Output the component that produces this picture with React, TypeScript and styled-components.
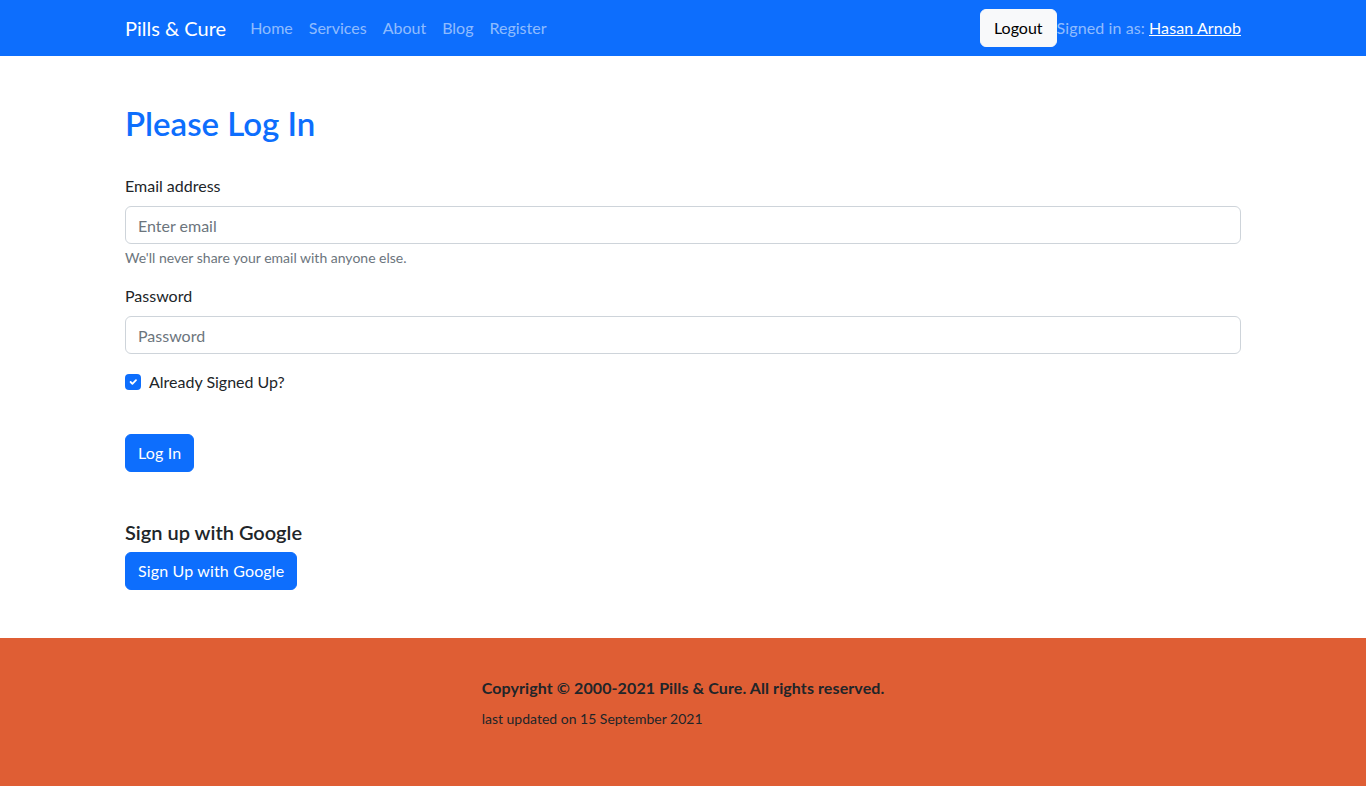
import React from "react";
import styled, { createGlobalStyle } from "styled-components";

const Global = createGlobalStyle`
  * { box-sizing: border-box; }
  html, body { margin: 0; padding: 0; }
  body {
    font-family: Lato, "Liberation Sans", sans-serif;
    font-size: 16px;
    line-height: 1.5;
    color: #212529;
    background: #fff;
  }
`;

const Navbar = styled.nav`
  background: #0d6efd;
  height: 56px;
`;

const Container = styled.div`
  width: 1140px;
  margin: 0 auto;
  padding: 0 12px;
`;

const NavInner = styled(Container)`
  height: 100%;
  display: flex;
  align-items: center;
`;

const Brand = styled.a`
  color: #fff;
  font-size: 20px;
  line-height: 30px;
  margin-right: 16px;
  text-decoration: none;
`;

const NavLinks = styled.div`
  display: flex;
  flex: 1;
`;

const NavLink = styled.a`
  color: rgba(255, 255, 255, 0.55);
  padding: 8px;
  text-decoration: none;
`;

const LightButton = styled.button`
  font: inherit;
  background: #f8f9fa;
  color: #000;
  border: 1px solid #f8f9fa;
  border-radius: 6px;
  height: 38px;
  padding: 0 13px;
`;

const SignedIn = styled.span`
  color: rgba(255, 255, 255, 0.55);
  letter-spacing: 0.1px;
`;

const UserLink = styled.a`
  color: #fff;
  text-decoration: underline;
`;

const Main = styled(Container)`
  padding-top: 48px;
  padding-bottom: 48px;
`;

const Title = styled.h2`
  color: #0d6efd;
  font-size: 33px;
  font-weight: 600;
  line-height: 38px;
  margin: 0 0 32px;
`;

const Field = styled.div`
  margin-bottom: 16px;
`;

const Label = styled.label`
  display: block;
  margin-bottom: 8px;
`;

const Input = styled.input`
  display: block;
  width: 100%;
  height: 38px;
  padding: 6px 12px;
  font: inherit;
  color: #212529;
  border: 1px solid #ced4da;
  border-radius: 6px;
  &::placeholder { color: #6c757d; }
`;

const Help = styled.div`
  margin-top: 3px;
  font-size: 14px;
  line-height: 21px;
  color: #6c757d;
`;

const CheckRow = styled.div`
  display: flex;
  align-items: center;
  gap: 8px;
  min-height: 24px;
  margin-bottom: 40px;
`;

const CheckBox = styled.span`
  width: 16px;
  height: 16px;
  border-radius: 4px;
  background: #0d6efd;
  display: flex;
  align-items: center;
  justify-content: center;
`;

const PrimaryButton = styled.button`
  font: inherit;
  background: #0d6efd;
  color: #fff;
  border: 1px solid #0d6efd;
  border-radius: 6px;
  height: 38px;
  padding: 0 12px;
  letter-spacing: 0.15px;
`;

const SubTitle = styled.h5`
  font-size: 20px;
  font-weight: 600;
  line-height: 24px;
  margin: 48px 0 8px;
`;

const Footer = styled.footer`
  background: #df5e34;
  height: 148px;
  padding-top: 38px;
  display: flex;
  justify-content: center;
  align-items: flex-start;
`;

const FooterBlock = styled.div`
  display: flex;
  flex-direction: column;
  gap: 8px;
`;

const Copy = styled.div`
  font-weight: 700;
  color: #212529;
  letter-spacing: 0.1px;
`;

const Updated = styled.div`
  font-size: 14px;
  line-height: 21px;
  color: #212529;
`;

export default function App() {
  return (
    <>
      <Global />
      <Navbar>
        <NavInner>
          <Brand href="#">Pills &amp; Cure</Brand>
          <NavLinks>
            <NavLink href="#">Home</NavLink>
            <NavLink href="#">Services</NavLink>
            <NavLink href="#">About</NavLink>
            <NavLink href="#">Blog</NavLink>
            <NavLink href="#">Register</NavLink>
          </NavLinks>
          <LightButton>Logout</LightButton>
          <SignedIn>
            Signed in as: <UserLink href="#">Hasan Arnob</UserLink>
          </SignedIn>
        </NavInner>
      </Navbar>
      <Main>
        <Title>Please Log In</Title>
        <Field>
          <Label>Email address</Label>
          <Input type="email" placeholder="Enter email" />
          <Help>We'll never share your email with anyone else.</Help>
        </Field>
        <Field>
          <Label>Password</Label>
          <Input type="password" placeholder="Password" />
        </Field>
        <CheckRow>
          <CheckBox>
            <svg width="12" height="12" viewBox="0 0 20 20">
              <path d="M6 10l3 3l6-6" fill="none" stroke="#fff" strokeWidth="3" strokeLinecap="round" strokeLinejoin="round" />
            </svg>
          </CheckBox>
          <span>Already Signed Up?</span>
        </CheckRow>
        <PrimaryButton>Log In</PrimaryButton>
        <SubTitle>Sign up with Google</SubTitle>
        <PrimaryButton>Sign Up with Google</PrimaryButton>
      </Main>
      <Footer>
        <FooterBlock>
          <Copy>Copyright © 2000-2021 Pills &amp; Cure. All rights reserved.</Copy>
          <Updated>last updated on 15 September 2021</Updated>
        </FooterBlock>
      </Footer>
    </>
  );
}
